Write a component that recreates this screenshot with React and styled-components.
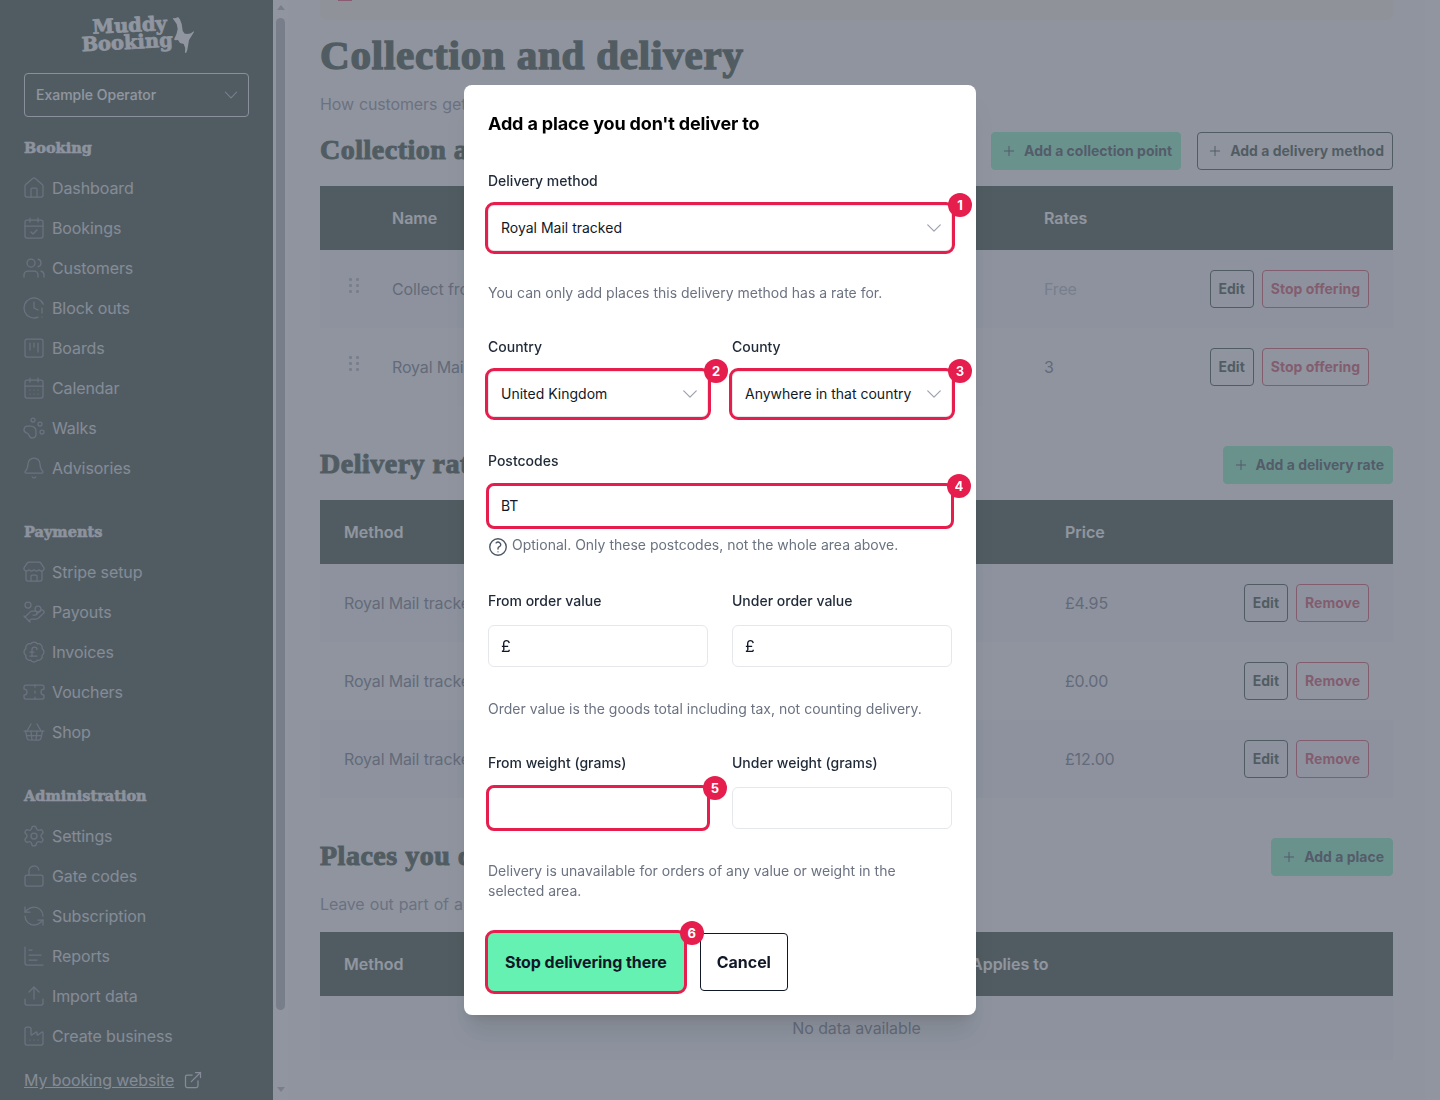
import React from "react";
import styled, { createGlobalStyle, css } from "styled-components";
import {
  BadgePoundSterling,
  Bell,
  CalendarCheck,
  CalendarDays,
  ChartBar,
  ClockAlert,
  ExternalLink,
  Factory,
  HandCoins,
  House,
  LockOpen,
  PawPrint,
  Plus,
  RefreshCcw,
  Settings,
  ShoppingBasket,
  SquareKanban,
  Store,
  Ticket,
  Upload,
  Users,
} from "lucide-react";
import { HiOutlineChevronDown, HiOutlineQuestionMarkCircle } from "react-icons/hi2";

const dark = "#041f08";
const red = "#e61e4d";
const mutedRed = "#c8203a";
const mint = "#64f1b2";

const GlobalStyle = createGlobalStyle`
  html, body {
    margin: 0;
    height: 1100px;
    overflow: hidden;
    font-family: Inter, "Liberation Sans", sans-serif;
    background: #fff;
  }
  * { box-sizing: border-box; }
`;

const heavySerif = css`
  font-family: "Liberation Serif", serif;
  font-weight: 700;
`;

const blockSerif = css`
  font-family: "DejaVu Serif", serif;
  font-weight: 700;
`;

const Shell = styled.div`
  display: flex;
  width: 1440px;
  height: 1100px;
  overflow: hidden;
`;

const Sidebar = styled.aside`
  width: 273px;
  flex: none;
  background: ${dark};
  padding: 15px 24px 0;
  color: #d1d5db;
`;

const LogoRow = styled.div`
  display: flex;
  justify-content: center;
  align-items: flex-start;
  height: 58px;
  padding-left: 3px;
`;

const LogoWords = styled.div`
  display: flex;
  flex-direction: column;
  align-items: flex-end;
  transform: rotate(-3deg);
  color: #fff;
  ${blockSerif};
  font-size: 19.5px;
  line-height: 17px;
  -webkit-text-stroke: 0.7px #fff;
  padding-top: 2px;
  span:first-child { margin-right: 5px; }
`;

const OperatorSelect = styled.div`
  height: 44px;
  border: 1px solid #e5e7eb;
  border-radius: 4px;
  display: flex;
  align-items: center;
  justify-content: space-between;
  padding: 0 8px 2px 11px;
  color: #fff;
  font-size: 14px;
  font-weight: 500;
  svg { color: #9ca3af; margin-top: 2px; }
`;

const GroupLabel = styled.div`
  ${blockSerif};
  font-size: 14.5px;
  line-height: 20px;
  height: 20px;
  margin-top: ${(p) => p.$top}px;
  margin-bottom: 10px;
  color: #f3f4f6;
  -webkit-text-stroke: 0.5px #f3f4f6;
`;

const NavItem = styled.div`
  height: 40px;
  display: flex;
  align-items: center;
  gap: 6px;
  margin-left: -2px;
  font-size: 16px;
  letter-spacing: -0.1px;
  color: #d1d5db;
  svg { color: #6b7280; flex: none; }
`;

const SiteLink = styled.a`
  display: flex;
  align-items: center;
  gap: 9px;
  height: 20px;
  margin-top: 14px;
  font-size: 16px;
  letter-spacing: -0.1px;
  color: #d1d5db;
  span { text-decoration: underline; }
`;

const ScrollTrack = styled.div`
  width: 15px;
  flex: none;
  background: #fff;
  display: flex;
  flex-direction: column;
  align-items: center;
  padding-top: 5px;
`;

const ArrowUp = styled.div`
  width: 0;
  height: 0;
  border-left: 4px solid transparent;
  border-right: 4px solid transparent;
  border-bottom: 5px solid #a3a3a3;
`;

const ArrowDown = styled(ArrowUp)`
  border-bottom: 0;
  border-top: 5px solid #a3a3a3;
  margin-top: 77px;
`;

const ScrollThumb = styled.div`
  width: 9px;
  height: 992px;
  margin-top: 8px;
  border-radius: 5px;
  background: #a0a3a8;
`;

const Main = styled.main`
  flex: 1;
  min-width: 0;
  background: #fcfcfc;
  padding: 0 32px;
`;

const Banner = styled.div`
  height: 20px;
  background: #fff1e6;
  border-radius: 0 0 6px 6px;
  padding-left: 18px;
`;

const BannerIcon = styled.div`
  width: 14px;
  height: 1px;
  background: ${red};
`;

const Title = styled.h1`
  ${heavySerif};
  font-size: 41px;
  letter-spacing: 0.8px;
  line-height: 40px;
  margin: 15px 0 0;
  padding-bottom: 1px;
  color: ${dark};
  -webkit-text-stroke: 1.5px ${dark};
  white-space: nowrap;
`;

const Sub = styled.p`
  margin: 16px 0 0;
  font-size: 16px;
  letter-spacing: -0.15px;
  word-spacing: 0.8px;
  line-height: 24px;
  color: #6b7280;
  white-space: nowrap;
`;

const SectionHead = styled.div`
  display: flex;
  align-items: center;
  justify-content: space-between;
  height: 38px;
  margin-top: ${(p) => p.$top}px;
`;

const SectionTitle = styled.h2`
  ${heavySerif};
  font-size: 28px;
  letter-spacing: 0.5px;
  margin: -2px 0 0;
  color: ${dark};
  -webkit-text-stroke: 1.1px ${dark};
  white-space: nowrap;
`;

const HeadActions = styled.div`
  display: flex;
  gap: 16px;
`;

const Button = styled.button`
  display: inline-flex;
  align-items: center;
  height: 38px;
  padding: 0 8px 2px;
  gap: 7px;
  border-radius: 4px;
  font-family: inherit;
  font-size: 14px;
  font-weight: 700;
  white-space: nowrap;
  background: ${(p) => (p.$primary ? mint : "transparent")};
  border: 1px solid ${(p) => (p.$danger ? mutedRed : p.$primary ? mint : dark)};
  color: ${(p) => (p.$danger ? mutedRed : p.$primary ? "#111827" : dark)};
  svg { margin: 2px 0 0 1px; }
`;

const Table = styled.div`
  margin-top: 16px;
`;

const HeadRow = styled.div`
  display: grid;
  grid-template-columns: ${(p) => p.$cols};
  align-items: center;
  height: 64px;
  padding-left: ${(p) => p.$pad}px;
  background: ${dark};
  color: #fff;
  font-size: 16px;
  font-weight: 600;
`;

const Row = styled.div`
  display: grid;
  grid-template-columns: ${(p) => p.$cols};
  align-items: center;
  height: 78px;
  padding: 0 24px 0 ${(p) => p.$pad}px;
  background: ${(p) => (p.$odd ? "#f3f4f6" : "#f9fafb")};
  color: #4b5563;
  font-size: 16px;
  letter-spacing: -0.15px;
  white-space: nowrap;
`;

const EmptyRow = styled.div`
  height: 64px;
  background: #f3f4f6;
  color: #4b5563;
  font-size: 16px;
  letter-spacing: -0.1px;
  display: flex;
  align-items: center;
  justify-content: center;
`;

const Muted = styled.span`
  color: #9ca3af;
`;

const Grip = styled.svg`
  margin: -6px 0 0 29px;
  color: #9ca3af;
`;

const Actions = styled.div`
  display: flex;
  gap: 8px;
`;

const Overlay = styled.div`
  position: fixed;
  inset: 0;
  background: rgba(107, 114, 128, 0.75);
  display: flex;
  align-items: center;
  justify-content: center;
`;

const Modal = styled.div`
  width: 512px;
  height: 930px;
  background: #fff;
  border-radius: 8px;
  padding: 25px 24px 24px;
  box-shadow: 0 20px 25px -5px rgba(0, 0, 0, 0.1), 0 8px 10px -6px rgba(0, 0, 0, 0.1);
`;

const ModalTitle = styled.h3`
  margin: 0 0 33px;
  font-size: 18px;
  line-height: 28px;
  font-weight: 700;
  letter-spacing: -0.15px;
  color: #000;
`;

const Label = styled.label`
  display: block;
  font-size: 14px;
  line-height: 20px;
  font-weight: 500;
  color: #1f2937;
  margin-top: ${(p) => p.$top || 0}px;
  margin-bottom: 14px;
`;

const Help = styled.p`
  margin: ${(p) => p.$top}px 0 ${(p) => p.$bottom}px;
  font-size: 14px;
  line-height: 20px;
  color: #6b7280;
`;

const Two = styled.div`
  display: grid;
  grid-template-columns: 220px 220px;
  gap: 24px;
`;

const Tagged = styled.div`
  position: relative;
  display: ${(p) => (p.$inline ? "inline-block" : "block")};
  border-radius: 6px;
  outline: 3px solid ${red};
  outline-offset: ${(p) => (p.$tight ? -1 : 0)}px;
`;

const Badge = styled.span`
  position: absolute;
  top: ${(p) => p.$top || -12}px;
  right: ${(p) => p.$right || -20}px;
  width: 24px;
  height: 24px;
  border-radius: 50%;
  background: ${red};
  color: #fff;
  font-size: 13px;
  font-weight: 700;
  display: flex;
  align-items: center;
  justify-content: center;
  z-index: 2;
`;

const SelectBox = styled.div`
  height: 46px;
  border: 1px solid #e5e7eb;
  border-radius: 6px;
  background: #fff;
  display: flex;
  align-items: center;
  justify-content: space-between;
  padding: 0 7px 1px 12px;
  font-size: 14px;
  color: #111827;
  white-space: nowrap;
  svg { color: #9ca3af; flex: none; }
`;

const InputBox = styled.div`
  height: 42px;
  border: 1px solid #e5e7eb;
  border-radius: 6px;
  background: #fff;
  display: flex;
  align-items: center;
  padding: 0 12px ${(p) => (p.$prefix ? 0 : 2)}px;
  font-size: ${(p) => (p.$prefix ? 16 : 14)}px;
  color: #111827;
`;

const Hint = styled.div`
  display: flex;
  gap: 3px;
  height: 20px;
  margin: 8px 0 36px;
  font-size: 14px;
  line-height: 20px;
  color: #6b7280;
  svg { flex: none; margin: 1px 0 0 -1px; color: #4b5563; }
`;

const ModalActions = styled.div`
  display: flex;
  gap: 16px;
  margin-top: 32px;
`;

const BigButton = styled.button`
  height: 58px;
  padding: 0 16px;
  border-radius: 4px;
  border: 1px solid ${(p) => (p.$primary ? mint : "#111827")};
  background: ${(p) => (p.$primary ? mint : "#fff")};
  color: #111827;
  font-family: inherit;
  font-size: 16px;
  font-weight: 700;
  letter-spacing: -0.05px;
  white-space: nowrap;
`;

const DogMark = () => (
  <svg width="24" height="38" viewBox="0 0 24 38" fill="#fff" style={{ marginLeft: -2, marginTop: 1 }}>
    <path d="M1.7 2.3 L5 2 L7 1 L9 3.5 L10.7 8 L11.7 15 L13.5 17.5 L16 18 L19.5 17.5 L22.7 15.2 L23 16 L20.5 20 L18 24 L17 30 L16 35 L15 37 L14 36.7 L14.2 32 L12.7 28 L9 27 L7 24 L4.5 24.2 L3 23.5 L5.5 18 L6.7 13 L5.7 8 L3 4.2 Z" />
  </svg>
);

const GripIcon = () => (
  <Grip width="10" height="16" viewBox="0 0 10 16" fill="currentColor">
    <rect x="0" y="0" width="3" height="3" rx="1" />
    <rect x="7" y="0" width="3" height="3" rx="1" />
    <rect x="0" y="6" width="3" height="3" rx="1" />
    <rect x="7" y="6" width="3" height="3" rx="1" />
    <rect x="0" y="12" width="3" height="3" rx="1" />
    <rect x="7" y="12" width="3" height="3" rx="1" />
  </Grip>
);

const bookingNav = [
  ["Dashboard", House],
  ["Bookings", CalendarCheck],
  ["Customers", Users],
  ["Block outs", ClockAlert],
  ["Boards", SquareKanban],
  ["Calendar", CalendarDays],
  ["Walks", PawPrint],
  ["Advisories", Bell],
];

const paymentNav = [
  ["Stripe setup", Store],
  ["Payouts", HandCoins],
  ["Invoices", BadgePoundSterling],
  ["Vouchers", Ticket],
  ["Shop", ShoppingBasket],
];

const adminNav = [
  ["Settings", Settings],
  ["Gate codes", LockOpen],
  ["Subscription", RefreshCcw],
  ["Reports", ChartBar],
  ["Import data", Upload],
  ["Create business", Factory],
];

const NavList = ({ items }) =>
  items.map(([label, Icon]) => (
    <NavItem key={label}>
      <Icon size={24} strokeWidth={1.25} />
      {label}
    </NavItem>
  ));

const AddButton = ({ primary, children }) => (
  <Button $primary={primary}>
    <Plus size={16} strokeWidth={1.5} />
    {children}
  </Button>
);

const methodCols = "72px 652px 1fr auto";
const rateCols = "721px 1fr auto";

export default function App() {
  return (
    <>
      <GlobalStyle />
      <Shell>
        <Sidebar>
          <LogoRow>
            <LogoWords>
              <span>Muddy</span>
              <span>Booking</span>
            </LogoWords>
            <DogMark />
          </LogoRow>
          <OperatorSelect>
            Example Operator
            <HiOutlineChevronDown size={18} />
          </OperatorSelect>
          <GroupLabel $top={21}>Booking</GroupLabel>
          <NavList items={bookingNav} />
          <GroupLabel $top={34}>Payments</GroupLabel>
          <NavList items={paymentNav} />
          <GroupLabel $top={34}>Administration</GroupLabel>
          <NavList items={adminNav} />
          <SiteLink>
            <span>My booking website</span>
            <ExternalLink size={20} strokeWidth={1.5} />
          </SiteLink>
        </Sidebar>
        <ScrollTrack>
          <ArrowUp />
          <ScrollThumb />
          <ArrowDown />
        </ScrollTrack>

        <Main>
          <Banner>
            <BannerIcon />
          </Banner>
          <Title>Collection and delivery</Title>
          <Sub>How customers get</Sub>

          <SectionHead $top={16}>
            <SectionTitle>Collection and delivery</SectionTitle>
            <HeadActions>
              <AddButton primary>Add a collection point</AddButton>
              <AddButton>Add a delivery method</AddButton>
            </HeadActions>
          </SectionHead>
          <Table>
            <HeadRow $cols={methodCols} $pad={0}>
              <span />
              <span>Name</span>
              <span>Rates</span>
            </HeadRow>
            <Row $cols={methodCols} $pad={0} $odd>
              <GripIcon />
              <span>Collect from</span>
              <Muted>Free</Muted>
              <Actions>
                <Button>Edit</Button>
                <Button $danger>Stop offering</Button>
              </Actions>
            </Row>
            <Row $cols={methodCols} $pad={0}>
              <GripIcon />
              <span>Royal Mail tracked</span>
              <span>3</span>
              <Actions>
                <Button>Edit</Button>
                <Button $danger>Stop offering</Button>
              </Actions>
            </Row>
          </Table>

          <SectionHead $top={40}>
            <SectionTitle>Delivery rates</SectionTitle>
            <AddButton primary>Add a delivery rate</AddButton>
          </SectionHead>
          <Table>
            <HeadRow $cols={rateCols} $pad={24}>
              <span>Method</span>
              <span>Price</span>
            </HeadRow>
            {["£4.95", "£0.00", "£12.00"].map((price, i) => (
              <Row key={price} $cols={rateCols} $pad={24} $odd={i !== 1}>
                <span>Royal Mail tracked</span>
                <span>{price}</span>
                <Actions>
                  <Button>Edit</Button>
                  <Button $danger>Remove</Button>
                </Actions>
              </Row>
            ))}
          </Table>

          <SectionHead $top={40}>
            <SectionTitle>Places you do</SectionTitle>
            <AddButton primary>Add a place</AddButton>
          </SectionHead>
          <Sub>Leave out part of a</Sub>
          <Table>
            <HeadRow $cols="627px 1fr" $pad={24}>
              <span>Method</span>
              <span>Applies to</span>
            </HeadRow>
            <EmptyRow>No data available</EmptyRow>
          </Table>
        </Main>
        <ScrollTrack />
      </Shell>

      <Overlay>
        <Modal>
          <ModalTitle>Add a place you don't deliver to</ModalTitle>

          <Label>Delivery method</Label>
          <Tagged>
            <SelectBox>
              Royal Mail tracked
              <HiOutlineChevronDown size={20} />
            </SelectBox>
            <Badge>1</Badge>
          </Tagged>
          <Help $top={32} $bottom={34}>
            You can only add places this delivery method has a rate for.
          </Help>

          <Two>
            <div>
              <Label>Country</Label>
              <Tagged>
                <SelectBox>
                  United Kingdom
                  <HiOutlineChevronDown size={20} />
                </SelectBox>
                <Badge>2</Badge>
              </Tagged>
            </div>
            <div>
              <Label>County</Label>
              <Tagged>
                <SelectBox>
                  Anywhere in that country
                  <HiOutlineChevronDown size={20} />
                </SelectBox>
                <Badge>3</Badge>
              </Tagged>
            </div>
          </Two>

          <Label $top={34}>Postcodes</Label>
          <Tagged $tight>
            <InputBox>BT</InputBox>
            <Badge $right={-19} $top={-11}>4</Badge>
          </Tagged>
          <Hint>
            <HiOutlineQuestionMarkCircle size={22} />
            Optional. Only these postcodes, not the whole area above.
          </Hint>

          <Two>
            <div>
              <Label>From order value</Label>
              <InputBox $prefix>£</InputBox>
            </div>
            <div>
              <Label>Under order value</Label>
              <InputBox $prefix>£</InputBox>
            </div>
          </Two>
          <Help $top={32} $bottom={34}>
            Order value is the goods total including tax, not counting delivery.
          </Help>

          <Two>
            <div>
              <Label>From weight (grams)</Label>
              <Tagged $tight>
                <InputBox />
                <Badge $right={-19} $top={-11}>5</Badge>
              </Tagged>
            </div>
            <div>
              <Label>Under weight (grams)</Label>
              <InputBox />
            </div>
          </Two>
          <Help $top={32} $bottom={0}>
            Delivery is unavailable for orders of any value or weight in the selected area.
          </Help>

          <ModalActions>
            <Tagged $inline>
              <BigButton $primary>Stop delivering there</BigButton>
              <Badge>6</Badge>
            </Tagged>
            <BigButton>Cancel</BigButton>
          </ModalActions>
        </Modal>
      </Overlay>
    </>
  );
}
